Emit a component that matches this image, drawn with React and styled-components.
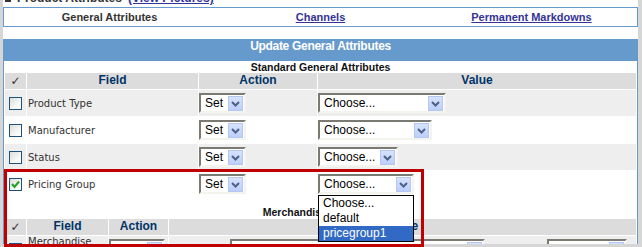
import React from "react";
import styled, { createGlobalStyle } from "styled-components";

const GlobalStyle = createGlobalStyle`
  html, body { margin: 0; padding: 0; }
  body {
    background: #d6d6d6;
    font-family: "DejaVu Sans", Verdana, sans-serif;
  }
`;

const mainCols = "21px 171px 118px 1fr";
const merchCols = "21px 81px 59px 1fr";

const App = () => {
  return (
    <Page>
      <GlobalStyle />
      <Frame>
        <TopStrip>
          <Bullet />
          <span>Product Attributes</span>
          <TopLink>(View Pictures)</TopLink>
        </TopStrip>

        <Tabs>
          <Tab $active>General Attributes</Tab>
          <Tab href="#">Channels</Tab>
          <Tab href="#">Permanent Markdowns</Tab>
        </Tabs>

        <MainBox>
          <TitleBar>Update General Attributes</TitleBar>
          <SubTitle>Standard General Attributes</SubTitle>

          <Table>
            <Row $cols={mainCols} $shade="#dcdcdc" $h={16}>
              <HeadCell>✓</HeadCell>
              <HeadCell>Field</HeadCell>
              <HeadCell>Action</HeadCell>
              <HeadCell>Value</HeadCell>
            </Row>
            {rows.map((r, i) => (
              <Row key={r.label} $cols={mainCols} $shade={i % 2 === 0 ? "#eeeeee" : "#ffffff"} $h={26}>
                <CheckCell>
                  <Checkbox checked={r.checked} />
                </CheckCell>
                <FieldCell>{r.label}</FieldCell>
                <SelectCell>
                  <Select text="Set" width={47} />
                </SelectCell>
                <SelectCell>
                  {r.open ? (
                    <SelectWrap>
                      <Select text="Choose..." width={r.width} />
                      <DropList>
                        <Option>Choose...</Option>
                        <Option>default</Option>
                        <Option $selected>pricegroup1</Option>
                      </DropList>
                    </SelectWrap>
                  ) : (
                    <Select text="Choose..." width={r.width} />
                  )}
                </SelectCell>
              </Row>
            ))}
          </Table>

          <SubTitle2>Merchandise Hierarchy</SubTitle2>

          <Table>
            <Row $cols={merchCols} $shade="#dcdcdc" $h={16}>
              <HeadCell>✓</HeadCell>
              <HeadCell>Field</HeadCell>
              <HeadCell>Action</HeadCell>
              <HeadCell>Value</HeadCell>
            </Row>
            <Row $cols={merchCols} $shade="#eeeeee" $h={26}>
              <CheckCell>
                <Checkbox />
              </CheckCell>
              <FieldCell $top>Merchandise</FieldCell>
              <SelectCell>
                <Select text="Set" width={56} />
              </SelectCell>
              <MerchValues>
                <Select text="" width={255} />
                <Select text="" width={80} />
              </MerchValues>
            </Row>
          </Table>
        </MainBox>
      </Frame>
      <Highlight />
    </Page>
  );
};

const rows = [
  { label: "Product Type", width: 128 },
  { label: "Manufacturer", width: 114 },
  { label: "Status", width: 80 },
  { label: "Pricing Group", width: 96, checked: true, open: true },
];

const Checkbox = ({ checked }) => (
  <Box>
    {checked && (
      <svg width="11" height="11" viewBox="0 0 11 11">
        <polyline points="2,5 4.5,8 9,2.5" fill="none" stroke="#21a121" strokeWidth="2" />
      </svg>
    )}
  </Box>
);

const Select = ({ text, width }) => (
  <SelectBox style={{ width }}>
    <SelectText>{text}</SelectText>
    <Arrow>
      <svg width="15" height="15" viewBox="0 0 15 15">
        <polyline points="4,6 7.5,9.5 11,6" fill="none" stroke="#4d6185" strokeWidth="2" />
      </svg>
    </Arrow>
  </SelectBox>
);

const Page = styled.div`
  position: relative;
  width: 642px;
  height: 247px;
  overflow: hidden;
`;

const Frame = styled.div`
  margin-left: 3px;
  width: 635px;
  height: 244px;
  background: #fff;
  overflow: hidden;
`;

const TopStrip = styled.div`
  height: 7px;
  box-sizing: border-box;
  padding: 0 0 3px 2px;
  display: flex;
  align-items: flex-end;
  gap: 6px;
  overflow: hidden;
  font: bold 12px "Liberation Sans", Arial, sans-serif;
  line-height: 12px;
  color: #333;
  white-space: nowrap;
`;

const Bullet = styled.span`
  width: 6px;
  height: 6px;
  background: #333;
  margin-bottom: 2px;
`;

const TopLink = styled.span`
  color: #333399;
  text-decoration: underline;
`;

const Tabs = styled.div`
  display: grid;
  grid-template-columns: repeat(3, 1fr);
  align-items: center;
  height: 18px;
  border: 1px solid #6699cc;
`;

const Tab = styled.a`
  text-align: center;
  font: bold 11px "Liberation Sans", Arial, sans-serif;
  color: ${(p) => (p.$active ? "#333333" : "#333399")};
  text-decoration: ${(p) => (p.$active ? "none" : "underline")};
`;

const MainBox = styled.div`
  margin-top: 12px;
  border-left: 1px solid #6699cc;
  border-right: 1px solid #6699cc;
  height: 220px;
`;

const TitleBar = styled.div`
  height: 22px;
  line-height: 22px;
  margin: 0 -1px;
  background: #6699cc;
  color: #fff;
  text-align: center;
  font: bold 12px "Liberation Sans", Arial, sans-serif;
  letter-spacing: -0.3px;
`;

const SubTitle = styled.div`
  height: 12px;
  line-height: 12px;
  text-align: center;
  font: bold 10.5px "Liberation Sans", Arial, sans-serif;
  color: #111;
`;

const SubTitle2 = styled(SubTitle)`
  height: 22px;
  line-height: 12px;
  display: flex;
  align-items: flex-end;
  justify-content: center;
  padding-bottom: 1px;
  box-sizing: border-box;
`;

const Table = styled.div`
  display: flex;
  flex-direction: column;
  row-gap: 1px;
  padding: 0 1px;
`;

const Row = styled.div`
  display: grid;
  grid-template-columns: ${(p) => p.$cols};
  column-gap: 1px;
  height: ${(p) => p.$h}px;
  & > * {
    background: ${(p) => p.$shade};
  }
`;

const HeadCell = styled.div`
  text-align: center;
  line-height: 16px;
  font: bold 12px "Liberation Sans", Arial, sans-serif;
  color: #003366;
  &:first-child {
    font: 12px "DejaVu Sans", sans-serif;
    line-height: 16px;
    color: #333;
  }
`;

const CheckCell = styled.div`
  display: flex;
  align-items: center;
  justify-content: center;
`;

const FieldCell = styled.div`
  display: flex;
  align-items: ${(p) => (p.$top ? "flex-start" : "center")};
  padding-left: 1px;
  font-size: 10px;
  color: #333;
  white-space: nowrap;
  overflow: hidden;
`;

const SelectCell = styled.div`
  display: flex;
  align-items: center;
`;

const MerchValues = styled(SelectCell)`
  padding-left: 61px;
  gap: 62px;
`;

const Box = styled.span`
  width: 13px;
  height: 13px;
  box-sizing: border-box;
  border: 1px solid #1c5180;
  background: linear-gradient(135deg, #dcdcd7 0%, #f6f6f4 60%, #ffffff 100%);
  display: flex;
  align-items: center;
  justify-content: center;
`;

const SelectWrap = styled.div`
  position: relative;
`;

const SelectBox = styled.div`
  height: 20px;
  box-sizing: border-box;
  display: flex;
  align-items: center;
  background: #fff;
  border-style: solid;
  border-width: 2px;
  border-color: #7a7a72 #f4f4ee #f4f4ee #7a7a72;
`;

const SelectText = styled.span`
  flex: 1;
  padding-left: 4px;
  font: 12px "Liberation Sans", Arial, sans-serif;
  color: #000;
  white-space: nowrap;
`;

const Arrow = styled.span`
  width: 15px;
  height: 15px;
  margin-right: 1px;
  box-sizing: border-box;
  border: 1px solid #b4c6f4;
  background: linear-gradient(180deg, #d6e2fd 0%, #bccffa 100%);
  display: flex;
  align-items: center;
  justify-content: center;
  svg {
    margin: -1px;
  }
`;

const DropList = styled.div`
  position: absolute;
  top: 100%;
  left: 0;
  right: 0;
  margin-top: 1px;
  background: #fff;
  border: 1px solid #000;
  z-index: 2;
`;

const Option = styled.div`
  height: 15px;
  line-height: 15px;
  padding-left: 4px;
  font: 12px "Liberation Sans", Arial, sans-serif;
  color: ${(p) => (p.$selected ? "#fff" : "#000")};
  background: ${(p) => (p.$selected ? "#316ac5" : "#fff")};
`;

const Highlight = styled.div`
  position: absolute;
  left: 4px;
  top: 169px;
  width: 420px;
  height: 78px;
  box-sizing: border-box;
  border: 3px solid #c00000;
  pointer-events: none;
  z-index: 3;
`;

export default App;
